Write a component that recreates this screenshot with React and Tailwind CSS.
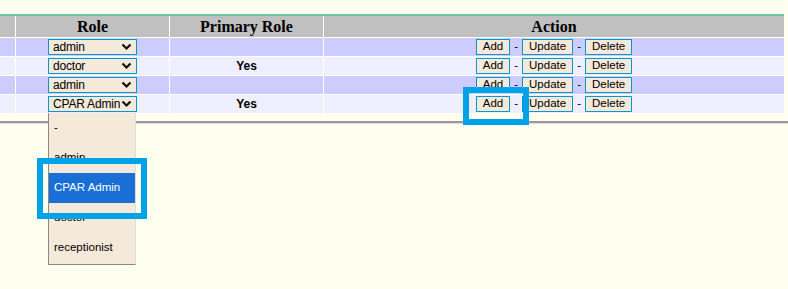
import React from 'react';

const rows = [
  { role: 'admin', primary: '', bg: 'bg-[#ccccff]' },
  { role: 'doctor', primary: 'Yes', bg: 'bg-[#eeeeff]' },
  { role: 'admin', primary: '', bg: 'bg-[#ccccff]' },
  { role: 'CPAR Admin', primary: 'Yes', bg: 'bg-[#eeeeff]' },
];

const options = ['-', 'admin', 'CPAR Admin', 'doctor', 'receptionist'];

const Chevron = () => (
  <svg width="11" height="8" viewBox="0 0 11 8" className="shrink-0">
    <path d="M1.5 1.5 L5.5 5.5 L9.5 1.5" fill="none" stroke="#111" strokeWidth="2.2" />
  </svg>
);

const Select = ({ value, open }) => (
  <div className="relative">
    <div className="w-[89px] h-[16px] border border-[#0099cc] bg-[#f5e9d9] flex items-center justify-between pl-[4px] pr-[4px] text-[12px] leading-none text-black">
      <span className="whitespace-nowrap tracking-[-0.2px]">{value}</span>
      <Chevron />
    </div>
    {open && (
      <div className="absolute left-0 top-[17px] w-[88px] h-[152px] bg-[#f5e9d9] border-l border-b border-r border-[#888] border-r-[#ddd] z-10 flex flex-col">
        {options.map((o) => (
          <div
            key={o}
            className={`h-[30px] flex items-center pl-[5px] text-[11.5px] ${o === 'CPAR Admin' ? 'bg-[#1a6fd6] text-white' : 'text-black'}`}
          >
            {o}
          </div>
        ))}
      </div>
    )}
  </div>
);

const Btn = ({ children }) => (
  <div className="h-[16px] border border-[#0099cc] bg-[#f5e9d9] px-[6px] flex items-center text-[11.5px] leading-none text-black">
    {children}
  </div>
);

export default function App() {
  return (
    <div className="relative w-[788px] h-[289px] bg-[#fffff0] overflow-hidden" style={{ fontFamily: '"Liberation Sans", Arial, sans-serif' }}>
      <div className="pt-[14px]">
        <div className="w-[784px] border-t-2 border-[#6cc8a4] bg-white flex flex-col gap-px">
          <div className="flex gap-px h-[21px] bg-white">
            <div className="w-[15px] bg-[#c0c0c0]" />
            <div className="w-[153px] bg-[#c0c0c0] flex items-center justify-center font-bold text-[16px]" style={{ fontFamily: '"Liberation Serif", serif' }}>Role</div>
            <div className="w-[153px] bg-[#c0c0c0] flex items-center justify-center font-bold text-[16px]" style={{ fontFamily: '"Liberation Serif", serif' }}>Primary Role</div>
            <div className="flex-1 bg-[#c0c0c0] flex items-center justify-center font-bold text-[16px]" style={{ fontFamily: '"Liberation Serif", serif' }}>Action</div>
          </div>
          {rows.map((r, i) => (
            <div key={i} className="flex gap-px h-[18px]">
              <div className={`w-[15px] ${r.bg}`} />
              <div className={`w-[153px] ${r.bg} flex items-center justify-center`}>
                <Select value={r.role} open={i === 3} />
              </div>
              <div className={`w-[153px] ${r.bg} flex items-center justify-center font-bold text-[12px]`}>{r.primary}</div>
              <div className={`flex-1 ${r.bg} flex items-center justify-center gap-[4px] text-[11.5px]`}>
                <Btn>Add</Btn>
                <span>-</span>
                <Btn>Update</Btn>
                <span>-</span>
                <Btn>Delete</Btn>
              </div>
            </div>
          ))}
        </div>
        <div className="mt-[8px] border-t-2 border-[#999] border-b border-b-[#ddd]" />
      </div>
      <div className="absolute left-[37px] top-[158px] w-[110px] h-[61px] border-[6px] border-[#00a2e8] z-20" />
      <div className="absolute left-[463px] top-[87px] w-[66px] h-[38px] border-[6px] border-[#00a2e8] z-20" />
    </div>
  );
}
